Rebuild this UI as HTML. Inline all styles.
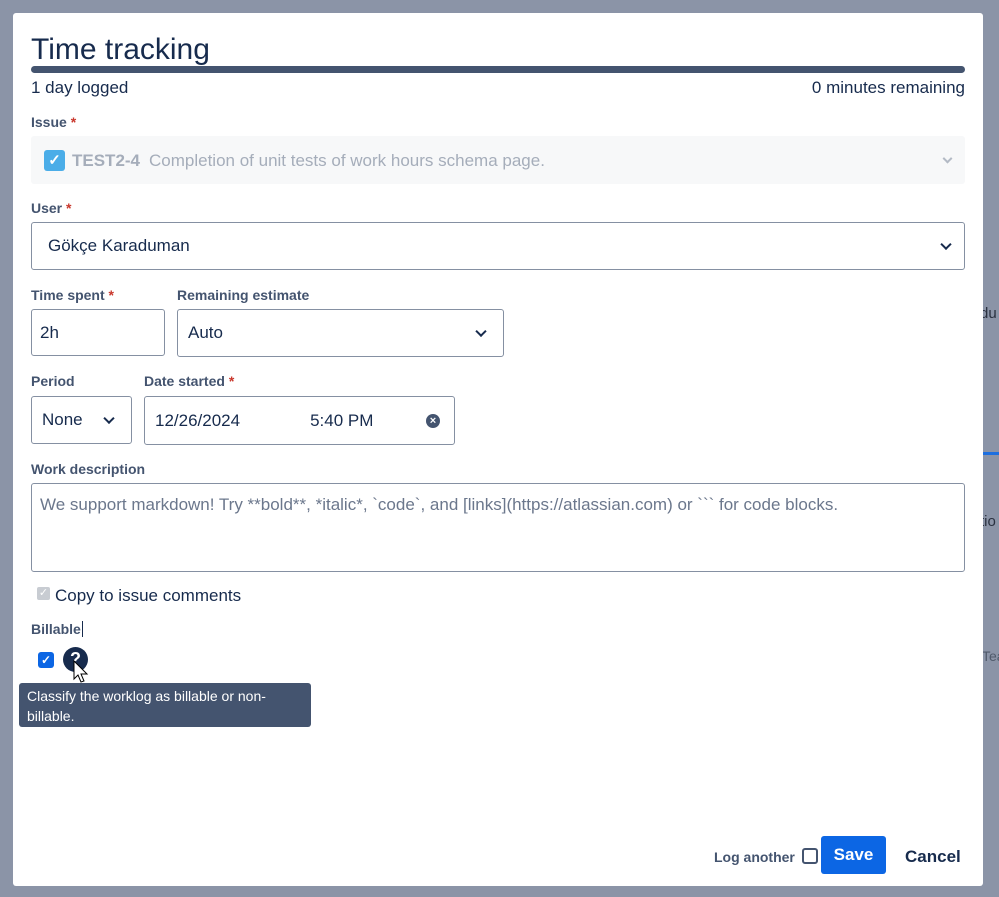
<!DOCTYPE html>
<html><head><style>
*{box-sizing:border-box;margin:0;padding:0}
body{width:999px;height:897px;background:#8b94a7;font-family:"Liberation Sans",sans-serif;color:#172b4d;position:relative;overflow:hidden}
.a{position:absolute}
.m{left:13px;top:13px;width:970px;height:873px;background:#fff;border-radius:3px}
.lbl{font-size:14px;font-weight:bold;color:#44546f}
.lbl i{color:#c9372c;font-style:normal}
.box{border:1px solid #8590a2;border-radius:3px;background:#fff;font-size:17px;color:#172b4d;display:flex;align-items:center;padding-left:10px}
.chev{position:absolute;right:14px;top:50%;width:8px;height:8px;border-right:2px solid #172b4d;border-bottom:2px solid #172b4d;transform:translateY(-70%) rotate(45deg)}
</style></head><body>
<div class="a" style="left:980px;top:305px;font-size:15px;color:#2a3140">du</div>
<div class="a" style="left:983px;top:452px;width:16px;height:3px;background:#1d6fe0"></div>
<div class="a" style="left:980px;top:513px;font-size:15px;color:#2a3140">tio</div>
<div class="a" style="left:982px;top:648px;font-size:14px;color:#505a6b">Tea</div>
<div class="a m"></div>
<div class="a" style="left:31px;top:33px;font-size:30px;color:#172b4d">Time tracking</div>
<div class="a" style="left:31px;top:66px;width:934px;height:7px;background:#44546f;border-radius:4px"></div>
<div class="a" style="left:31px;top:78px;font-size:17px">1 day logged</div>
<div class="a" style="right:34px;top:78px;font-size:17px">0 minutes remaining</div>
<div class="a lbl" style="left:31px;top:114px">Issue <i>*</i></div>
<div class="a" style="left:31px;top:136px;width:934px;height:48px;background:#f7f8f9;border-radius:3px;font-size:17px;color:#a5adba">
 <div class="a" style="left:13px;top:14px;width:21px;height:21px;background:#4bade8;border-radius:3px;color:#fff;font-size:15px;text-align:center;line-height:21px;font-weight:bold">✓</div>
 <div class="a" style="left:41px;top:15px;font-weight:bold;color:#a5adba">TEST2-4</div>
 <div class="a" style="left:118px;top:15px">Completion of unit tests of work hours schema page.</div>
 <div class="chev" style="border-color:#b3bac5;width:7px;height:7px"></div>
</div>
<div class="a lbl" style="left:31px;top:200px">User <i>*</i></div>
<div class="a box" style="left:31px;top:222px;width:934px;height:48px;padding-left:16px">Gökçe Karaduman<div class="chev"></div></div>
<div class="a lbl" style="left:31px;top:287px">Time spent <i>*</i></div>
<div class="a lbl" style="left:177px;top:287px">Remaining estimate</div>
<div class="a box" style="left:31px;top:309px;width:134px;height:47px;padding-left:8px">2h</div>
<div class="a box" style="left:177px;top:309px;width:327px;height:48px">Auto<div class="chev" style="right:18px"></div></div>
<div class="a lbl" style="left:31px;top:373px">Period</div>
<div class="a lbl" style="left:144px;top:373px">Date started <i>*</i></div>
<div class="a box" style="left:31px;top:396px;width:101px;height:48px">None<div class="chev" style="right:18px"></div></div>
<div class="a box" style="left:144px;top:396px;width:311px;height:49px">12/26/2024<span style="margin-left:70px">5:40 PM</span>
 <div class="a" style="right:14px;top:17px;width:14px;height:14px;border-radius:50%;background:#44546f;color:#fff;font-size:11px;line-height:14px;text-align:center;font-weight:bold">×</div></div>
<div class="a lbl" style="left:31px;top:461px">Work description</div>
<div class="a" style="left:31px;top:483px;width:934px;height:89px;border:1px solid #8590a2;border-radius:3px;font-size:17px;color:#6b778c;padding:11px 8px">We support markdown! Try **bold**, *italic*, &#96;code&#96;, and [links](https://atlassian.com) or &#96;&#96;&#96; for code blocks.</div>
<div class="a" style="left:37px;top:587px;width:13px;height:13px;background:#c8ccd2;border-radius:2px;color:#fff;font-size:11px;line-height:13px;text-align:center">✓</div>
<div class="a" style="left:55px;top:586px;font-size:17px">Copy to issue comments</div>
<div class="a lbl" style="left:31px;top:621px">Billable<span style="border-left:1px solid #172b4d;margin-left:1px"></span></div>
<div class="a" style="left:38px;top:652px;width:16px;height:16px;background:#0c66e4;border-radius:3px;color:#fff;font-size:12px;line-height:16px;text-align:center;font-weight:bold">✓</div>
<div class="a" style="left:63px;top:647px;width:25px;height:25px;border-radius:50%;background:#172b4d;color:#fff;font-size:18px;font-weight:bold;line-height:25px;text-align:center">?</div>
<svg class="a" style="left:72px;top:660px" width="20" height="24" viewBox="0 0 20 24"><path d="M2 1 L2 19 L6 15 L9 22 L12 21 L9 14 L15 14 Z" fill="#fff" stroke="#000" stroke-width="1"/></svg>
<div class="a" style="left:19px;top:683px;width:292px;height:44px;background:#44546f;border-radius:3px;color:#fff;font-size:14px;line-height:20px;padding:3px 8px">Classify the worklog as billable or non-billable.</div>
<div class="a lbl" style="left:714px;top:849px;color:#44546f">Log another</div>
<div class="a" style="left:802px;top:848px;width:16px;height:16px;border:2px solid #44546f;border-radius:3px"></div>
<div class="a" style="left:821px;top:836px;width:65px;height:38px;background:#0c66e4;border-radius:3px;color:#fff;font-size:17px;font-weight:bold;text-align:center;line-height:38px">Save</div>
<div class="a" style="left:905px;top:847px;font-size:17px;font-weight:bold;color:#172b4d">Cancel</div>
</body></html>
